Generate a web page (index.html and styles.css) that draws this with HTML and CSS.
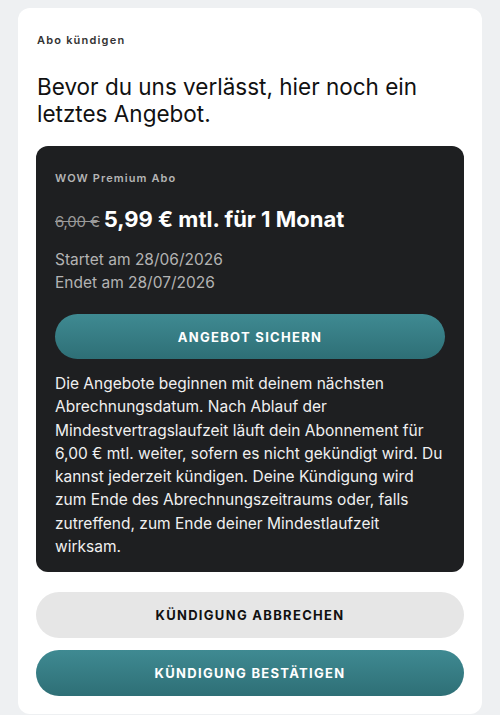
FILE: index.html
```html
<!DOCTYPE html>
<html lang="de">
<head>
<meta charset="utf-8">
<link rel="stylesheet" href="styles.css">
</head>
<body>
<div class="page">
  <div class="card">
    <div class="eyebrow">Abo kündigen</div>
    <h1 class="title">Bevor du uns verlässt, hier noch ein letztes Angebot.</h1>
    <div class="offer">
      <div class="plan">WOW Premium Abo</div>
      <div class="price"><span class="old">6,00 €</span> <span class="new">5,99 € mtl. für 1 Monat</span></div>
      <div class="dates">
        <div>Startet am 28/06/2026</div>
        <div>Endet am 28/07/2026</div>
      </div>
      <button class="btn btn-teal btn-offer">ANGEBOT SICHERN</button>
      <p class="terms">Die Angebote beginnen mit deinem nächsten Abrechnungsdatum. Nach Ablauf der Mindestvertragslaufzeit läuft dein Abonnement für 6,00 € mtl. weiter, sofern es nicht gekündigt wird. Du kannst jederzeit kündigen. Deine Kündigung wird zum Ende des Abrechnungszeitraums oder, falls zutreffend, zum Ende deiner Mindestlaufzeit wirksam.</p>
    </div>
    <div class="actions">
      <button class="btn btn-grey">KÜNDIGUNG ABBRECHEN</button>
      <button class="btn btn-teal">KÜNDIGUNG BESTÄTIGEN</button>
    </div>
  </div>
</div>
</body>
</html>
```

FILE: styles.css
```css
* { box-sizing: border-box; }
html, body { margin: 0; padding: 0; }
body {
  background: #eef0f2;
  font-family: Inter, "Noto Sans", sans-serif;
  color: #111;
}
.page {
  padding: 8px 18px 2px;
}
.card {
  background: #fff;
  border-radius: 12px;
  padding: 24px 18px 18px;
}
.eyebrow {
  font-size: 11px;
  line-height: 16px;
  font-weight: 600;
  letter-spacing: 1.2px;
  color: #333;
  padding-left: 1px;
}
.title {
  margin: 25px 0 19px;
  font-size: 22.5px;
  line-height: 27px;
  font-weight: 400;
  color: #111;
  padding-left: 1px;
}
.offer {
  background: #1e1f21;
  border-radius: 12px;
  padding: 24px 19px 14px;
  color: #fff;
}
.plan {
  font-size: 11px;
  line-height: 16px;
  font-weight: 600;
  letter-spacing: 1.1px;
  color: #b5b5b5;
}
.price {
  margin-top: 19px;
  line-height: 28px;
  display: flex;
  align-items: baseline;
  gap: 4px;
}
.old {
  font-size: 15px;
  color: #9a9a9a;
  text-decoration: line-through;
  letter-spacing: -0.2px;
}
.new {
  font-size: 22px;
  font-weight: 700;
  color: #fff;
}
.dates {
  margin-top: 12px;
  font-size: 15.5px;
  line-height: 23px;
  color: #b3b3b3;
}
.btn {
  display: block;
  width: 100%;
  border: none;
  border-radius: 23px;
  height: 46px;
  font-family: inherit;
  font-size: 13px;
  font-weight: 700;
  letter-spacing: 1.3px;
  padding: 0;
}
.btn-teal {
  background: linear-gradient(#3f8a92, #2e6f76);
  color: #fff;
}
.btn-offer {
  margin-top: 20px;
  height: 45px;
}
.terms {
  margin: 13px 0 0;
  font-size: 15.5px;
  line-height: 23.3px;
  color: #f0f0f0;
}
.actions {
  margin-top: 20px;
  display: flex;
  flex-direction: column;
  gap: 12px;
}
.btn-grey {
  background: #e6e6e6;
  color: #111;
}
```
